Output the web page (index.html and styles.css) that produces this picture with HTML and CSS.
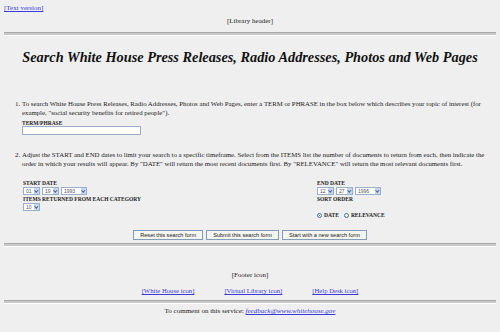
FILE: index.html
```html
<!DOCTYPE html>
<html>
<head>
<meta charset="utf-8">
<title>Search White House Press Releases</title>
<link rel="stylesheet" href="styles.css">
</head>
<body>
<div class="textver"><a href="#">[Text version]</a></div>
<div class="libheader">[Library header]</div>
<hr class="rule">
<h1 class="title">Search White House Press Releases, Radio Addresses, Photos and Web Pages</h1>

<form class="search">
  <ol class="steps">
    <li>
      <p>To search White House Press Releases, Radio Addresses, Photos and Web Pages, enter a TERM or PHRASE in the box below which describes your topic of interest (for example, "social security benefits for retired people").</p>
      <div class="lbl">TERM/PHRASE</div>
      <input type="text" class="term">
    </li>
    <li>
      <p>Adjust the START and END dates to limit your search to a specific timeframe. Select from the ITEMS list the number of documents to return from each, then indicate the order in which your results will appear. By "DATE" will return the most recent documents first. By "RELEVANCE" will return the most relevant documents first.</p>
    </li>
  </ol>

  <div class="opts">
    <div class="col">
      <div class="lbl">START DATE</div>
      <div class="sels">
        <span class="sel w2">01</span><span class="sel w2">19</span><span class="sel w4">1993</span>
      </div>
      <div class="lbl">ITEMS RETURNED FROM EACH CATEGORY</div>
      <div class="sels">
        <span class="sel w2">10</span>
      </div>
    </div>
    <div class="col">
      <div class="lbl">END DATE</div>
      <div class="sels">
        <span class="sel w2">12</span><span class="sel w2">27</span><span class="sel w4">1996</span>
      </div>
      <div class="lbl">SORT ORDER</div>
      <div class="radios">
        <span class="radio on"></span><b>DATE</b>
        <span class="radio"></span><b>RELEVANCE</b>
      </div>
    </div>
  </div>

  <div class="btns">
    <button type="button">Reset this search form</button>
    <button type="button">Submit this search form</button>
    <button type="button">Start with a new search form</button>
  </div>
</form>

<hr class="rule low">
<div class="foot">
  <div class="footicon">[Footer icon]</div>
  <div class="footlinks">
    <a href="#">[White House icon]</a>
    <a href="#">[Virtual Library icon]</a>
    <a href="#">[Help Desk icon]</a>
  </div>
</div>
<hr class="rule foot-rule">
<div class="comment">To comment on this service: <a href="#"><i>feedback@www.whitehouse.gov</i></a></div>
</body>
</html>
```

FILE: styles.css
```css
body { margin: 4px; background: #efefef; color: #222; font-family: "Liberation Serif", serif; font-size: 7px; }
a { color: #3a3ad6; }
p { margin: 0; }

.textver { line-height: 9px; }
.libheader { text-align: center; margin-top: 4px; line-height: 9px; }

.rule { margin: 6px 0 0; border: 0; height: 2px; border-top: 1px solid #a8a8a8; background: #c8c8c8; border-bottom: 1px solid #fff; }
.rule.low { margin-top: 3px; }
.rule.foot-rule { margin-top: 5px; }

.title { margin: 12px 0 0; text-align: center; font-size: 14.3px; font-style: italic; font-weight: bold; color: #111; line-height: 18px; }

.steps { margin: 33px 0 0; padding-left: 18px; }
.steps li { line-height: 9px; padding-right: 8px; }
.steps li + li { margin-top: 15px; }
.steps p { font-size: 6.8px; }

.lbl { font-weight: bold; font-size: 5.5px; line-height: 6px; }
.steps .lbl { margin-top: 3px; }
.term { display: block; box-sizing: border-box; width: 119px; height: 9px; margin: 0; padding: 0; border: 1px solid #9ab0c8; background: #fff; }

.opts { display: grid; grid-template-columns: 294px 1fr; margin: 12px 0 0 19px; }
.sels { display: flex; gap: 2px; margin: 1px 0 1px; }
.sel { position: relative; box-sizing: border-box; height: 8px; border: 1px solid #9ab0c8; background: #fff; font-family: "Liberation Sans", sans-serif; font-size: 5px; line-height: 6px; padding-left: 2px; color: #555; }
.sel::after { content: ""; position: absolute; right: 0; top: 0; width: 5px; height: 6px; background: #c5d5f5; }
.sel::before { content: ""; position: absolute; z-index: 1; right: 1.5px; top: 1.3px; width: 1.6px; height: 1.6px; border-right: 1px solid #4d6185; border-bottom: 1px solid #4d6185; transform: rotate(45deg); }
.w2 { width: 17px; }
.w4 { width: 26px; }

.radios { display: flex; align-items: center; gap: 2px; margin-top: 10px; font-size: 5.5px; }
.radios b + .radio { margin-left: 3px; }
.radio { box-sizing: border-box; width: 5px; height: 5px; border: 1px solid #3a6ea5; border-radius: 50%; background: #fff; }
.radio.on { background: radial-gradient(#2f9e2f 35%, #fff 45%); }

.btns { display: flex; justify-content: center; gap: 3px; margin-top: 12px; }
.btns button { height: 10px; padding: 0 6px; border: 1px solid #7f9db9; background: #f4f4f0; font-family: "Liberation Sans", sans-serif; font-size: 5.6px; line-height: 7px; color: #222; }

.foot { padding-top: 24px; text-align: center; }
.footicon { line-height: 9px; }
.footlinks { display: flex; justify-content: center; gap: 30px; margin-top: 6px; line-height: 9px; font-size: 6.7px; }
.comment { text-align: center; margin-top: 3px; line-height: 9px; }
```
